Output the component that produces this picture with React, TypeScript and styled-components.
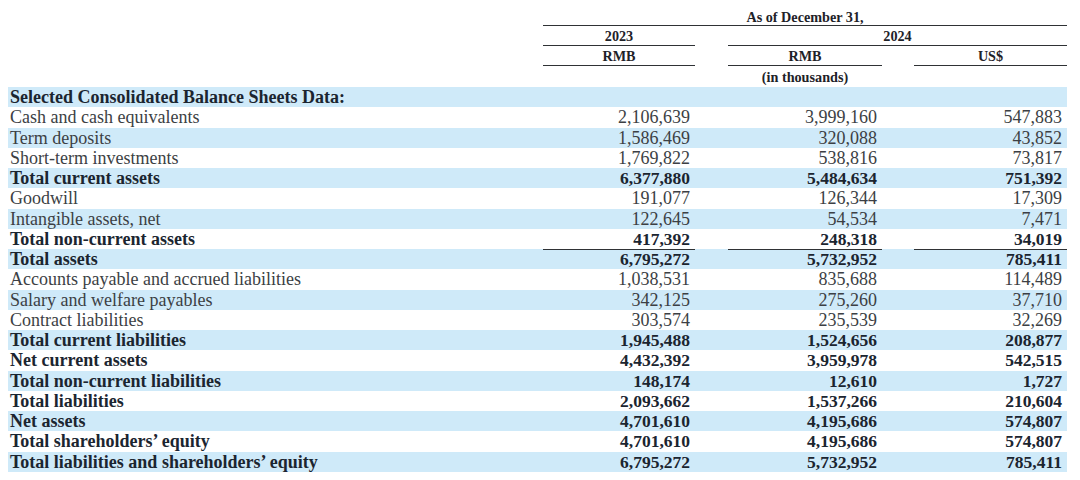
import React from "react";
import styled, { createGlobalStyle } from "styled-components";

const Global = createGlobalStyle`
  html, body { margin: 0; padding: 0; background: #ffffff; }
  body { font-family: "Liberation Serif", "Times New Roman", serif; }
`;

const COLS = "535px 152px 33px 154px 32px 153px";

const Page = styled.div`
  padding: 8px 0 0 8px;
  width: 1059px;
`;

const HeadRow = styled.div<{ h: number }>`
  display: grid;
  grid-template-columns: ${COLS};
  height: ${(p) => p.h}px;
  font-weight: 700;
  font-size: 14.2px;
  line-height: 16px;
  color: #1e2228;
`;

const HeadCell = styled.div<{ col: string; line?: boolean }>`
  grid-column: ${(p) => p.col};
  display: flex;
  align-items: center;
  justify-content: center;
  border-bottom: ${(p) => (p.line ? "1.6px solid #2f3235" : "none")};
  box-sizing: border-box;
  padding-top: 1px;
`;

const Row = styled.div<{ shaded: boolean }>`
  display: grid;
  grid-template-columns: ${COLS};
  height: 20.25px;
  background: ${(p) => (p.shaded ? "#cfeaf9" : "transparent")};
  align-items: stretch;
`;

const Label = styled.div<{ bold: boolean }>`
  grid-column: 1;
  padding-left: 2px;
  display: flex;
  align-items: center;
  font-size: 18px;
  line-height: 20px;
  font-weight: ${(p) => (p.bold ? 700 : 400)};
  color: ${(p) => (p.bold ? "#1b2530" : "#3c3f44")};
  white-space: nowrap;
`;

const Num = styled.div<{ col: number; bold: boolean; line?: boolean }>`
  grid-column: ${(p) => p.col};
  display: flex;
  align-items: center;
  justify-content: flex-end;
  padding-right: 5px;
  font-size: ${(p) => (p.bold ? "17.5px" : "18px")};
  line-height: 20px;
  font-weight: ${(p) => (p.bold ? 700 : 400)};
  color: ${(p) => (p.bold ? "#1b2530" : "#3c3f44")};
  border-bottom: ${(p) => (p.line ? "1.6px solid #2f3235" : "none")};
  box-sizing: border-box;
`;

type Item = { label: string; v: [string, string, string]; bold?: boolean; line?: boolean };

const data: Item[] = [
  { label: "Cash and cash equivalents", v: ["2,106,639", "3,999,160", "547,883"] },
  { label: "Term deposits", v: ["1,586,469", "320,088", "43,852"] },
  { label: "Short-term investments", v: ["1,769,822", "538,816", "73,817"] },
  { label: "Total current assets", v: ["6,377,880", "5,484,634", "751,392"], bold: true },
  { label: "Goodwill", v: ["191,077", "126,344", "17,309"] },
  { label: "Intangible assets, net", v: ["122,645", "54,534", "7,471"] },
  { label: "Total non-current assets", v: ["417,392", "248,318", "34,019"], bold: true, line: true },
  { label: "Total assets", v: ["6,795,272", "5,732,952", "785,411"], bold: true },
  { label: "Accounts payable and accrued liabilities", v: ["1,038,531", "835,688", "114,489"] },
  { label: "Salary and welfare payables", v: ["342,125", "275,260", "37,710"] },
  { label: "Contract liabilities", v: ["303,574", "235,539", "32,269"] },
  { label: "Total current liabilities", v: ["1,945,488", "1,524,656", "208,877"], bold: true },
  { label: "Net current assets", v: ["4,432,392", "3,959,978", "542,515"], bold: true },
  { label: "Total non-current liabilities", v: ["148,174", "12,610", "1,727"], bold: true },
  { label: "Total liabilities", v: ["2,093,662", "1,537,266", "210,604"], bold: true },
  { label: "Net assets", v: ["4,701,610", "4,195,686", "574,807"], bold: true },
  { label: "Total shareholders\u2019 equity", v: ["4,701,610", "4,195,686", "574,807"], bold: true },
  { label: "Total liabilities and shareholders\u2019 equity", v: ["6,795,272", "5,732,952", "785,411"], bold: true },
];

export default function App() {
  return (
    <>
      <Global />
      <Page>
        <HeadRow h={17}>
          <HeadCell col="2 / 7" line>As of December 31,</HeadCell>
        </HeadRow>
        <HeadRow h={21}>
          <HeadCell col="2" line>2023</HeadCell>
          <HeadCell col="4 / 7" line>2024</HeadCell>
        </HeadRow>
        <HeadRow h={20}>
          <HeadCell col="2" line>RMB</HeadCell>
          <HeadCell col="4" line>RMB</HeadCell>
          <HeadCell col="6" line>US$</HeadCell>
        </HeadRow>
        <HeadRow h={21}>
          <HeadCell col="4">(in thousands)</HeadCell>
        </HeadRow>
        <Row shaded>
          <Label bold>Selected Consolidated Balance Sheets Data:</Label>
        </Row>
        {data.map((d, i) => (
          <Row key={d.label} shaded={i % 2 === 1}>
            <Label bold={!!d.bold}>{d.label}</Label>
            <Num col={2} bold={!!d.bold} line={d.line}>{d.v[0]}</Num>
            <Num col={4} bold={!!d.bold} line={d.line}>{d.v[1]}</Num>
            <Num col={6} bold={!!d.bold} line={d.line}>{d.v[2]}</Num>
          </Row>
        ))}
      </Page>
    </>
  );
}
